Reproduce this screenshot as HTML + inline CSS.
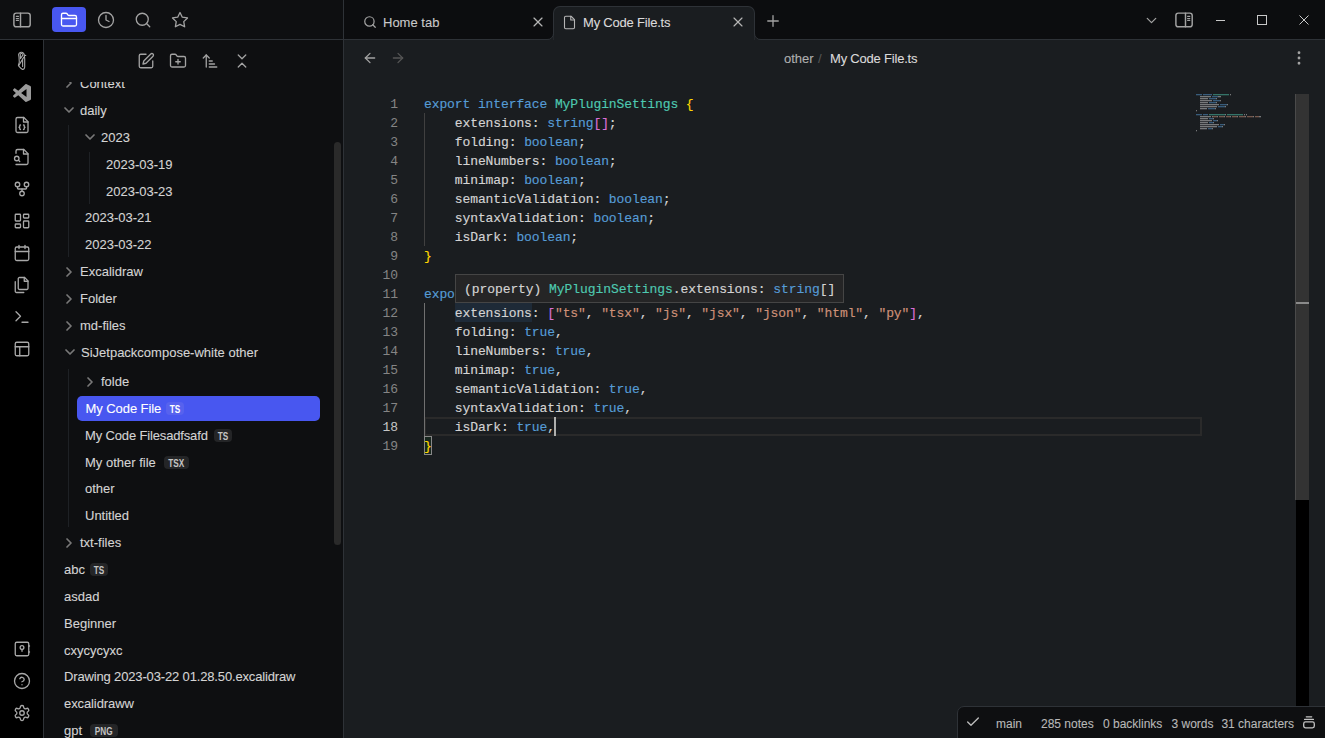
<!DOCTYPE html>
<html><head><meta charset="utf-8">
<style>
*{box-sizing:border-box;margin:0;padding:0}
html,body{width:1325px;height:738px;overflow:hidden;background:#1a1d20}
body{position:relative;font-family:"Liberation Sans",sans-serif;color:#dadada}
.a{position:absolute}
.t{position:absolute;white-space:pre;font-size:13px;line-height:16px;-webkit-text-stroke:0.1px currentColor}
svg.i{position:absolute;fill:none;stroke:currentColor;stroke-width:1.75;stroke-linecap:round;stroke-linejoin:round}
.badge{position:absolute;height:13px;border-radius:4px;background:#242527;text-align:center;color:#c4c4c4;font-size:10px;line-height:13px}
.badge span{display:block;font-weight:bold;transform:scaleX(0.82);position:relative;top:1px}
.code{position:absolute;font-family:"Liberation Mono",monospace;font-size:13px;letter-spacing:-0.1px;line-height:19px;white-space:pre;color:#d4d4d4;-webkit-text-stroke:0.15px currentColor}
.k{color:#569cd6}.ty{color:#4ec9b0}.s{color:#ce9178}.y{color:#ffd700}.p{color:#da70d6}
.ln{position:absolute;font-family:"Liberation Mono",monospace;font-size:13px;letter-spacing:-0.1px;line-height:19px;color:#858585;text-align:right;width:40px;left:358px}
</style></head><body>
<div class="a" style="left:0;top:0;width:343px;height:39px;background:#0e0f11"></div>
<div class="a" style="left:344px;top:0;width:981px;height:39px;background:#0c0d0f"></div>
<div class="a" style="left:0;top:39px;width:1325px;height:1px;background:#2e3237"></div>
<div class="a" style="left:0;top:40px;width:43px;height:698px;background:#000"></div>
<div class="a" style="left:44px;top:40px;width:299px;height:698px;background:#0e0f11"></div>
<div class="a" style="left:43px;top:39px;width:1px;height:699px;background:#2e3237"></div>
<div class="a" style="left:343px;top:0;width:1px;height:738px;background:#2e3237"></div>
<svg class="i" style="left:8px;top:8px;width:28px;height:24px;color:#a3a3a3;stroke-width:1.45" viewBox="0 0 28 24"><rect x="5.9" y="5.1" width="16.3" height="13.7" rx="2.4"/><path d="M12.5 5.1v13.7"/><path d="M8.3 8.3h2.2M8.3 10.6h2.2M8.3 12.5h2.2" stroke-width="1.2"/></svg>
<div class="a" style="left:52px;top:7px;width:34px;height:25px;border-radius:4px;background:#4857f0"></div>
<svg class="i" style="left:60px;top:11px;width:18px;height:18px;color:#ffffff;stroke-width:1.75" viewBox="0 0 24 24"><path d="M20 20a2 2 0 0 0 2-2V8a2 2 0 0 0-2-2h-7.9a2 2 0 0 1-1.69-.9L9.6 3.9A2 2 0 0 0 7.93 3H4a2 2 0 0 0-2 2v13a2 2 0 0 0 2 2Z"/><path d="M2 10h20"/></svg>
<svg class="i" style="left:97px;top:11px;width:18px;height:18px;color:#a3a3a3;stroke-width:1.75" viewBox="0 0 24 24"><circle cx="12" cy="12" r="10"/><polyline points="12 6 12 12 16 14"/></svg>
<svg class="i" style="left:134px;top:11px;width:18px;height:18px;color:#a3a3a3;stroke-width:1.75" viewBox="0 0 24 24"><circle cx="11" cy="11" r="8"/><path d="m21 21-4.3-4.3"/></svg>
<svg class="i" style="left:171px;top:11px;width:18px;height:18px;color:#a3a3a3;stroke-width:1.75" viewBox="0 0 24 24"><polygon points="12 2 15.09 8.26 22 9.27 17 14.14 18.18 21.02 12 17.77 5.82 21.02 7 14.14 2 9.27 8.91 8.26 12 2"/></svg>
<div class="a" style="left:553px;top:6px;width:202px;height:34px;background:#1a1d20;border:1px solid #2e3237;border-bottom:none;border-radius:7px 7px 0 0"></div>
<svg class="a" style="left:547px;top:33px;width:7px;height:7px" viewBox="0 0 7 7"><path d="M0 6.5 A6 6 0 0 0 6.5 0.5 L6.5 7 L0 7Z" fill="#1a1d20"/><path d="M0 6.5 A6 6 0 0 0 6.5 0.5" fill="none" stroke="#2e3237" stroke-width="1"/></svg>
<svg class="a" style="left:754px;top:33px;width:7px;height:7px" viewBox="0 0 7 7"><path d="M7 6.5 A6 6 0 0 1 0.5 0.5 L0.5 7 L7 7Z" fill="#1a1d20"/><path d="M7 6.5 A6 6 0 0 1 0.5 0.5" fill="none" stroke="#2e3237" stroke-width="1"/></svg>
<svg class="i" style="left:363px;top:15px;width:14px;height:14px;color:#a3a3a3;stroke-width:2.1" viewBox="0 0 24 24"><circle cx="11" cy="11" r="8"/><path d="m21 21-4.3-4.3"/></svg>
<div class="t" style="left:383px;top:15px;color:#c9c9c9">Home tab</div>
<svg class="i" style="left:530px;top:14px;width:16px;height:16px;color:#b5b5b5;stroke-width:1.75" viewBox="0 0 24 24"><path d="M18 6 6 18"/><path d="m6 6 12 12"/></svg>
<svg class="i" style="left:562px;top:15px;width:15px;height:15px;color:#b5b5b5;stroke-width:1.75" viewBox="0 0 24 24"><path d="M14.5 2H6a2 2 0 0 0-2 2v16a2 2 0 0 0 2 2h12a2 2 0 0 0 2-2V7.5L14.5 2z"/><polyline points="14 2 14 8 20 8"/></svg>
<div class="t" style="left:583px;top:15px;color:#dadada;letter-spacing:-0.2px">My Code File.ts</div>
<svg class="i" style="left:730px;top:14px;width:16px;height:16px;color:#b5b5b5;stroke-width:1.75" viewBox="0 0 24 24"><path d="M18 6 6 18"/><path d="m6 6 12 12"/></svg>
<svg class="i" style="left:764px;top:12px;width:18px;height:18px;color:#a3a3a3;stroke-width:1.75" viewBox="0 0 24 24"><path d="M5 12h14"/><path d="M12 5v14"/></svg>
<svg class="i" style="left:1143px;top:12px;width:17px;height:17px;color:#a3a3a3;stroke-width:1.75" viewBox="0 0 24 24"><path d="m6 9 6 6 6-6"/></svg>
<svg class="i" style="left:1170px;top:8px;width:28px;height:24px;color:#a3a3a3;stroke-width:1.45" viewBox="0 0 28 24"><rect x="5.9" y="5.1" width="16.3" height="13.7" rx="2.4"/><path d="M15.5 5.1v13.7"/><path d="M17.6 8.3h2.2M17.6 10.6h2.2M17.6 12.5h2.2" stroke-width="1.2"/></svg>
<div class="a" style="left:1216px;top:20px;width:9px;height:1px;background:#c8c8c8"></div>
<div class="a" style="left:1257px;top:15px;width:10px;height:10px;border:1px solid #c8c8c8"></div>
<svg class="a" style="left:1299px;top:15px;width:10px;height:10px" viewBox="0 0 10 10"><path d="M0.5 0.5L9.5 9.5M9.5 0.5L0.5 9.5" stroke="#c8c8c8" stroke-width="1"/></svg>
<svg class="i" style="left:362px;top:50px;width:16px;height:16px;color:#a3a3a3;stroke-width:1.9" viewBox="0 0 24 24"><path d="m12 19-7-7 7-7"/><path d="M19 12H5"/></svg>
<svg class="i" style="left:390px;top:50px;width:16px;height:16px;color:#555555;stroke-width:1.9" viewBox="0 0 24 24"><path d="M5 12h14"/><path d="m12 5 7 7-7 7"/></svg>
<div class="t" style="left:784px;top:51px;color:#b0b0b0">other</div>
<div class="t" style="left:818px;top:51px;color:#555">/</div>
<div class="t" style="left:830px;top:51px;color:#dadada;letter-spacing:-0.2px">My Code File.ts</div>
<svg class="i" style="left:1290px;top:49px;width:18px;height:18px;color:#a3a3a3;stroke-width:1.75" viewBox="0 0 24 24"><circle cx="12" cy="12" r="1"/><circle cx="12" cy="5" r="1"/><circle cx="12" cy="19" r="1"/></svg>
<svg class="a" style="left:12px;top:48px;width:20px;height:26px" viewBox="0 0 20 26"><g fill="none" stroke="#a6a6a6" stroke-width="1.1" stroke-linejoin="round" stroke-linecap="round"><path d="M6.6 6.6 C7 4.6 9 3.9 10.6 4.4 C11.5 4.8 12 5.5 12.3 6.6 L12.7 10.8 L12.7 19 C12.5 20.6 11.6 21.5 10.5 21.4 C9.4 20.9 8 19.6 7 18.4 L6.4 17.3 L7.3 14.2 L7 8.8 Z"/><path d="M8.3 5.9 C9.2 5 10.6 5.6 11 6.9 L8.4 10.6 Z"/><path d="M11.8 9.2 L6.8 17.4"/><path d="M10.6 11 L10.6 18.4"/></g><circle cx="13.6" cy="7.4" r="0.7" fill="#a6a6a6"/></svg>
<svg class="a" style="left:13px;top:84px;width:18px;height:18px" viewBox="0 0 100 100"><path fill="#9a9a9a" d="M96.46 10.8L75.86.87C73.48-.28 70.62.2 68.75 2.07L29.3 38.05 12.12 25.01c-1.6-1.21-3.840-1.11-5.33.24L1.28 30.26c-1.81 1.65-1.81 4.5 0 6.15L16.18 50 1.28 63.59c-1.81 1.65-1.81 4.5 0 6.15l5.51 5.01c1.49 1.35 3.73 1.45 5.33.24l17.18-13.04 39.45 35.98c1.87 1.87 4.73 2.35 7.11 1.2l20.6-9.93c2.16-1.04 3.54-3.23 3.54-5.63V16.43c0-2.4-1.38-4.59-3.54-5.63zM75.02 72.7L45.11 50l29.91-22.7v45.4z"/></svg>
<svg class="i" style="left:12.5px;top:116.0px;width:18px;height:18px;color:#a8a8a8;stroke-width:1.75" viewBox="0 0 24 24"><path d="M14.5 2H6a2 2 0 0 0-2 2v16a2 2 0 0 0 2 2h12a2 2 0 0 0 2-2V7.5L14.5 2z"/><polyline points="14 2 14 8 20 8"/><path d="M10 12a1 1 0 0 0-1 1v1a1 1 0 0 1-1 1 1 1 0 0 1 1 1v1a1 1 0 0 0 1 1"/><path d="M14 18a1 1 0 0 0 1-1v-1a1 1 0 0 1 1-1 1 1 0 0 1-1-1v-1a1 1 0 0 0-1-1"/></svg>
<svg class="i" style="left:12.5px;top:148.0px;width:18px;height:18px;color:#a8a8a8;stroke-width:1.75" viewBox="0 0 24 24"><path d="M4 22h14a2 2 0 0 0 2-2V7.5L14.5 2H6a2 2 0 0 0-2 2v3"/><polyline points="14 2 14 8 20 8"/><path d="M5 17a3 3 0 1 0 0-6 3 3 0 0 0 0 6z"/><path d="m9 18-1.5-1.5"/></svg>
<svg class="i" style="left:12.5px;top:180.0px;width:18px;height:18px;color:#a8a8a8;stroke-width:1.75" viewBox="0 0 24 24"><circle cx="12" cy="18" r="3"/><circle cx="6" cy="6" r="3"/><circle cx="18" cy="6" r="3"/><path d="M18 9v2c0 .6-.4 1-1 1H7c-.6 0-1-.4-1-1V9"/><path d="M12 12v3"/></svg>
<svg class="i" style="left:12.5px;top:212.0px;width:18px;height:18px;color:#a8a8a8;stroke-width:1.75" viewBox="0 0 24 24"><rect width="7" height="9" x="3" y="3" rx="1"/><rect width="7" height="5" x="14" y="3" rx="1"/><rect width="7" height="9" x="14" y="12" rx="1"/><rect width="7" height="5" x="3" y="16" rx="1"/></svg>
<svg class="i" style="left:12.5px;top:244.0px;width:18px;height:18px;color:#a8a8a8;stroke-width:1.75" viewBox="0 0 24 24"><rect width="18" height="18" x="3" y="4" rx="2" ry="2"/><line x1="16" x2="16" y1="2" y2="6"/><line x1="8" x2="8" y1="2" y2="6"/><line x1="3" x2="21" y1="10" y2="10"/></svg>
<svg class="i" style="left:12.5px;top:276.0px;width:18px;height:18px;color:#a8a8a8;stroke-width:1.75" viewBox="0 0 24 24"><path d="M15.5 2H8.6c-.4 0-.8.2-1.1.5-.3.3-.5.7-.5 1.1v12.8c0 .4.2.8.5 1.1.3.3.7.5 1.1.5h9.8c.4 0 .8-.2 1.1-.5.3-.3.5-.7.5-1.1V6.5L15.5 2z"/><path d="M3 7.6v12.8c0 .4.2.8.5 1.1.3.3.7.5 1.1.5h9.8"/><path d="M15 2v5h5"/></svg>
<svg class="i" style="left:12.5px;top:308.0px;width:18px;height:18px;color:#a8a8a8;stroke-width:1.75" viewBox="0 0 24 24"><polyline points="4 17 10 11 4 5"/><line x1="12" x2="20" y1="19" y2="19"/></svg>
<svg class="i" style="left:12.5px;top:340.0px;width:18px;height:18px;color:#a8a8a8;stroke-width:1.75" viewBox="0 0 24 24"><rect width="18" height="18" x="3" y="3" rx="2"/><path d="M3 9h18"/><path d="M9 21V9"/></svg>
<svg class="i" style="left:12.5px;top:640.0px;width:18px;height:18px;color:#a8a8a8;stroke-width:1.75" viewBox="0 0 24 24"><rect x="3" y="3" width="18" height="18" rx="2"/><circle cx="12" cy="10" r="2.5"/><path d="M12 12.5V15"/><path d="M21 8h1M21 16h1"/></svg>
<svg class="i" style="left:12.5px;top:672.0px;width:18px;height:18px;color:#a8a8a8;stroke-width:1.75" viewBox="0 0 24 24"><circle cx="12" cy="12" r="10"/><path d="M9.09 9a3 3 0 0 1 5.83 1c0 2-3 3-3 3"/><path d="M12 17h.01"/></svg>
<svg class="i" style="left:12.5px;top:704.0px;width:18px;height:18px;color:#a8a8a8;stroke-width:1.75" viewBox="0 0 24 24"><path d="M12.22 2h-.44a2 2 0 0 0-2 2v.18a2 2 0 0 1-1 1.73l-.43.25a2 2 0 0 1-2 0l-.15-.08a2 2 0 0 0-2.73.73l-.22.38a2 2 0 0 0 .73 2.73l.15.1a2 2 0 0 1 1 1.72v.51a2 2 0 0 1-1 1.74l-.15.09a2 2 0 0 0-.73 2.73l.22.38a2 2 0 0 0 2.73.73l.15-.08a2 2 0 0 1 2 0l.43.25a2 2 0 0 1 1 1.73V20a2 2 0 0 0 2 2h.44a2 2 0 0 0 2-2v-.18a2 2 0 0 1 1-1.73l.43-.25a2 2 0 0 1 2 0l.15.08a2 2 0 0 0 2.73-.73l.22-.39a2 2 0 0 0-.73-2.73l-.15-.08a2 2 0 0 1-1-1.74v-.5a2 2 0 0 1 1-1.74l.15-.09a2 2 0 0 0 .73-2.73l-.22-.38a2 2 0 0 0-2.73-.73l-.15.08a2 2 0 0 1-2 0l-.43-.25a2 2 0 0 1-1-1.73V4a2 2 0 0 0-2-2z"/><circle cx="12" cy="12" r="3"/></svg>
<svg class="i" style="left:137px;top:52px;width:18px;height:18px;color:#a3a3a3;stroke-width:1.75" viewBox="0 0 24 24"><path d="M12 3H5a2 2 0 0 0-2 2v14a2 2 0 0 0 2 2h14a2 2 0 0 0 2-2v-7"/><path d="M18.375 2.625a2.121 2.121 0 1 1 3 3L12 15l-4 1 1-4Z"/></svg>
<svg class="i" style="left:169px;top:52px;width:18px;height:18px;color:#a3a3a3;stroke-width:1.75" viewBox="0 0 24 24"><path d="M12 10v6"/><path d="M9 13h6"/><path d="M20 20a2 2 0 0 0 2-2V8a2 2 0 0 0-2-2h-7.9a2 2 0 0 1-1.69-.9L9.6 3.9A2 2 0 0 0 7.93 3H4a2 2 0 0 0-2 2v13a2 2 0 0 0 2 2Z"/></svg>
<svg class="i" style="left:201px;top:52px;width:18px;height:18px;color:#a3a3a3;stroke-width:1.75" viewBox="0 0 24 24"><path d="m3 8 4-4 4 4"/><path d="M7 4v16"/><path d="M11 12h4"/><path d="M11 16h7"/><path d="M11 20h10"/></svg>
<svg class="i" style="left:233px;top:52px;width:18px;height:18px;color:#a3a3a3;stroke-width:1.75" viewBox="0 0 24 24"><path d="m7 20 5-5 5 5"/><path d="m7 4 5 5 5-5"/></svg>
<div class="a" style="left:44px;top:82px;width:299px;height:656px;overflow:hidden">
<div class="a" style="left:33px;top:314px;width:243px;height:25px;border-radius:5px;background:#4857f0"></div>
<div class="a" style="left:24px;top:43px;width:1px;height:132px;background:#1e2125"></div>
<div class="a" style="left:45px;top:70px;width:1px;height:52px;background:#1e2125"></div>
<div class="a" style="left:24px;top:287px;width:1px;height:158px;background:#1e2125"></div>
<div class="a" style="left:290px;top:60px;width:7px;height:403px;border-radius:4px;background:#2a2a2a"></div>
<div class="t" style="left:36px;top:-6.1px;color:#d4d4d4;letter-spacing:0px">Context</div>
<svg class="i" style="left:16.5px;top:-6.6px;width:16px;height:16px;color:#787878;stroke-width:2.6" viewBox="0 0 24 24"><path d="m9 18 6-6-6-6"/></svg>
<div class="t" style="left:36px;top:20.8px;color:#d4d4d4;letter-spacing:0px">daily</div>
<svg class="i" style="left:16.5px;top:20.3px;width:16px;height:16px;color:#787878;stroke-width:2.6" viewBox="0 0 24 24"><path d="m6 9 6 6 6-6"/></svg>
<div class="t" style="left:57px;top:47.7px;color:#d4d4d4;letter-spacing:0px">2023</div>
<svg class="i" style="left:37.5px;top:47.2px;width:16px;height:16px;color:#787878;stroke-width:2.6" viewBox="0 0 24 24"><path d="m6 9 6 6 6-6"/></svg>
<div class="t" style="left:62px;top:74.6px;color:#d4d4d4;letter-spacing:0px">2023-03-19</div>
<div class="t" style="left:62px;top:101.5px;color:#d4d4d4;letter-spacing:0px">2023-03-23</div>
<div class="t" style="left:41px;top:128.4px;color:#d4d4d4;letter-spacing:0px">2023-03-21</div>
<div class="t" style="left:41px;top:155.3px;color:#d4d4d4;letter-spacing:0px">2023-03-22</div>
<div class="t" style="left:36px;top:182.2px;color:#d4d4d4;letter-spacing:0px">Excalidraw</div>
<svg class="i" style="left:16.5px;top:181.7px;width:16px;height:16px;color:#787878;stroke-width:2.6" viewBox="0 0 24 24"><path d="m9 18 6-6-6-6"/></svg>
<div class="t" style="left:36px;top:209.1px;color:#d4d4d4;letter-spacing:0px">Folder</div>
<svg class="i" style="left:16.5px;top:208.6px;width:16px;height:16px;color:#787878;stroke-width:2.6" viewBox="0 0 24 24"><path d="m9 18 6-6-6-6"/></svg>
<div class="t" style="left:36px;top:236.0px;color:#d4d4d4;letter-spacing:0px">md-files</div>
<svg class="i" style="left:16.5px;top:235.5px;width:16px;height:16px;color:#787878;stroke-width:2.6" viewBox="0 0 24 24"><path d="m9 18 6-6-6-6"/></svg>
<div class="t" style="left:37px;top:262.9px;color:#d4d4d4;letter-spacing:0px">SiJetpackcompose-white other</div>
<svg class="i" style="left:17.5px;top:262.4px;width:16px;height:16px;color:#787878;stroke-width:2.6" viewBox="0 0 24 24"><path d="m6 9 6 6 6-6"/></svg>
<div class="t" style="left:57px;top:292.0px;color:#d4d4d4;letter-spacing:0px">folde</div>
<svg class="i" style="left:37.5px;top:291.5px;width:16px;height:16px;color:#787878;stroke-width:2.6" viewBox="0 0 24 24"><path d="m9 18 6-6-6-6"/></svg>
<div class="t" style="left:41.599999999999994px;top:318.9px;color:#ffffff;letter-spacing:-0.08px">My Code File</div>
<div class="badge" style="top:319.9px;left:122.0px;width:18px;background:#5762ee;color:#fff"><span>TS</span></div>
<div class="t" style="left:41px;top:345.7px;color:#d4d4d4;letter-spacing:-0.15px">My Code Filesadfsafd</div>
<div class="badge" style="top:346.7px;left:169.5px;width:18px"><span>TS</span></div>
<div class="t" style="left:41px;top:372.6px;color:#d4d4d4;letter-spacing:0px">My other file</div>
<div class="badge" style="top:373.6px;left:120.2px;width:24.7px"><span>TSX</span></div>
<div class="t" style="left:41px;top:399.4px;color:#d4d4d4;letter-spacing:0px">other</div>
<div class="t" style="left:41px;top:426.2px;color:#d4d4d4;letter-spacing:0px">Untitled</div>
<div class="t" style="left:36px;top:453.1px;color:#d4d4d4;letter-spacing:0px">txt-files</div>
<svg class="i" style="left:16.5px;top:452.6px;width:16px;height:16px;color:#787878;stroke-width:2.6" viewBox="0 0 24 24"><path d="m9 18 6-6-6-6"/></svg>
<div class="t" style="left:20px;top:480.0px;color:#d4d4d4;letter-spacing:0px">abc</div>
<div class="badge" style="top:481.0px;left:46.2px;width:18px"><span>TS</span></div>
<div class="t" style="left:20px;top:506.8px;color:#d4d4d4;letter-spacing:0px">asdad</div>
<div class="t" style="left:20px;top:533.6px;color:#d4d4d4;letter-spacing:0px">Beginner</div>
<div class="t" style="left:20px;top:560.5px;color:#d4d4d4;letter-spacing:0px">cxycycyxc</div>
<div class="t" style="left:20px;top:587.4px;color:#d4d4d4;letter-spacing:-0.15px">Drawing 2023-03-22 01.28.50.excalidraw</div>
<div class="t" style="left:20px;top:614.2px;color:#d4d4d4;letter-spacing:-0.1px">excalidraww</div>
<div class="t" style="left:20px;top:641.0px;color:#d4d4d4;letter-spacing:0px">gpt</div>
<div class="badge" style="top:642.0px;left:46.3px;width:27.4px"><span>PNG</span></div>
</div>
<div class="a" style="left:455px;top:303px;width:77px;height:19px;background:#1e2a37"></div>
<div class="a" style="left:424px;top:417px;width:778px;height:19px;border:2px solid #2a2a2a"></div>
<div class="a" style="left:424px;top:436px;width:8px;height:19px;border:1px solid #888;background:#18271f"></div>
<div class="a" style="left:424px;top:113px;width:1px;height:133px;background:#404040"></div>
<div class="a" style="left:424px;top:303px;width:1px;height:133px;background:#707070"></div>
<div class="ln" style="top:95px;color:#858585">1</div>
<div class="ln" style="top:114px;color:#858585">2</div>
<div class="ln" style="top:133px;color:#858585">3</div>
<div class="ln" style="top:152px;color:#858585">4</div>
<div class="ln" style="top:171px;color:#858585">5</div>
<div class="ln" style="top:190px;color:#858585">6</div>
<div class="ln" style="top:209px;color:#858585">7</div>
<div class="ln" style="top:228px;color:#858585">8</div>
<div class="ln" style="top:247px;color:#858585">9</div>
<div class="ln" style="top:266px;color:#858585">10</div>
<div class="ln" style="top:285px;color:#858585">11</div>
<div class="ln" style="top:304px;color:#858585">12</div>
<div class="ln" style="top:323px;color:#858585">13</div>
<div class="ln" style="top:342px;color:#858585">14</div>
<div class="ln" style="top:361px;color:#858585">15</div>
<div class="ln" style="top:380px;color:#858585">16</div>
<div class="ln" style="top:399px;color:#858585">17</div>
<div class="ln" style="top:418px;color:#c6c6c6">18</div>
<div class="ln" style="top:437px;color:#858585">19</div>
<div class="code" style="left:424px;top:95px"><span class="k">export interface </span><span class="ty">MyPluginSettings</span> <span class="y">{</span>
    extensions: <span class="k">string</span><span class="p">[]</span>;
    folding: <span class="k">boolean</span>;
    lineNumbers: <span class="k">boolean</span>;
    minimap: <span class="k">boolean</span>;
    semanticValidation: <span class="k">boolean</span>;
    syntaxValidation: <span class="k">boolean</span>;
    isDark: <span class="k">boolean</span>;
<span class="y">}</span>

<span class="k">export const </span><span class="ty">DEFAULT_SETTINGS</span>: <span class="ty">MyPluginSettings</span> = <span class="y">{</span>
    extensions: <span class="p">[</span><span class="s">&quot;ts&quot;</span>, <span class="s">&quot;tsx&quot;</span>, <span class="s">&quot;js&quot;</span>, <span class="s">&quot;jsx&quot;</span>, <span class="s">&quot;json&quot;</span>, <span class="s">&quot;html&quot;</span>, <span class="s">&quot;py&quot;</span><span class="p">]</span>,
    folding: <span class="k">true</span>,
    lineNumbers: <span class="k">true</span>,
    minimap: <span class="k">true</span>,
    semanticValidation: <span class="k">true</span>,
    syntaxValidation: <span class="k">true</span>,
    isDark: <span class="k">true</span>,
<span class="y">}</span></div>
<div class="a" style="left:554px;top:417px;width:2px;height:19px;background:#aeafad"></div>
<div class="a" style="left:455px;top:274px;width:389px;height:29px;background:#252526;border:1px solid #454545"></div>
<div class="code" style="left:464px;top:280px;letter-spacing:-0.07px;color:#d4d4d4">(property) <span class="ty">MyPluginSettings</span>.extensions: <span class="k">string</span>[]</div>
<svg class="a" style="left:1196px;top:94px;width:70px;height:40px;opacity:0.5" viewBox="0 0 70 40"><rect x="0" y="0" width="6" height="1.3" fill="#569cd6"/><rect x="7" y="0" width="9" height="1.3" fill="#569cd6"/><rect x="17" y="0" width="16" height="1.3" fill="#4ec9b0"/><rect x="34" y="0" width="1" height="1.3" fill="#d4d4d4"/><rect x="4" y="2" width="11" height="1.3" fill="#d4d4d4"/><rect x="16" y="2" width="6" height="1.3" fill="#569cd6"/><rect x="22" y="2" width="2" height="1.3" fill="#d4d4d4"/><rect x="24" y="2" width="1" height="1.3" fill="#d4d4d4"/><rect x="4" y="4" width="8" height="1.3" fill="#d4d4d4"/><rect x="13" y="4" width="7" height="1.3" fill="#569cd6"/><rect x="20" y="4" width="1" height="1.3" fill="#d4d4d4"/><rect x="4" y="6" width="12" height="1.3" fill="#d4d4d4"/><rect x="17" y="6" width="7" height="1.3" fill="#569cd6"/><rect x="24" y="6" width="1" height="1.3" fill="#d4d4d4"/><rect x="4" y="8" width="8" height="1.3" fill="#d4d4d4"/><rect x="13" y="8" width="7" height="1.3" fill="#569cd6"/><rect x="20" y="8" width="1" height="1.3" fill="#d4d4d4"/><rect x="4" y="10" width="19" height="1.3" fill="#d4d4d4"/><rect x="24" y="10" width="7" height="1.3" fill="#569cd6"/><rect x="31" y="10" width="1" height="1.3" fill="#d4d4d4"/><rect x="4" y="12" width="17" height="1.3" fill="#d4d4d4"/><rect x="22" y="12" width="7" height="1.3" fill="#569cd6"/><rect x="29" y="12" width="1" height="1.3" fill="#d4d4d4"/><rect x="4" y="14" width="7" height="1.3" fill="#d4d4d4"/><rect x="12" y="14" width="7" height="1.3" fill="#569cd6"/><rect x="19" y="14" width="1" height="1.3" fill="#d4d4d4"/><rect x="0" y="16" width="1" height="1.3" fill="#d4d4d4"/><rect x="0" y="20" width="6" height="1.3" fill="#569cd6"/><rect x="7" y="20" width="5" height="1.3" fill="#569cd6"/><rect x="13" y="20" width="16" height="1.3" fill="#4ec9b0"/><rect x="29" y="20" width="1" height="1.3" fill="#d4d4d4"/><rect x="31" y="20" width="16" height="1.3" fill="#4ec9b0"/><rect x="48" y="20" width="1" height="1.3" fill="#d4d4d4"/><rect x="50" y="20" width="1" height="1.3" fill="#d4d4d4"/><rect x="4" y="22" width="11" height="1.3" fill="#d4d4d4"/><rect x="16" y="22" width="1" height="1.3" fill="#d4d4d4"/><rect x="17" y="22" width="4" height="1.3" fill="#ce9178"/><rect x="21" y="22" width="1" height="1.3" fill="#d4d4d4"/><rect x="23" y="22" width="5" height="1.3" fill="#ce9178"/><rect x="28" y="22" width="1" height="1.3" fill="#d4d4d4"/><rect x="30" y="22" width="4" height="1.3" fill="#ce9178"/><rect x="34" y="22" width="1" height="1.3" fill="#d4d4d4"/><rect x="36" y="22" width="5" height="1.3" fill="#ce9178"/><rect x="41" y="22" width="1" height="1.3" fill="#d4d4d4"/><rect x="43" y="22" width="6" height="1.3" fill="#ce9178"/><rect x="49" y="22" width="1" height="1.3" fill="#d4d4d4"/><rect x="51" y="22" width="6" height="1.3" fill="#ce9178"/><rect x="57" y="22" width="1" height="1.3" fill="#d4d4d4"/><rect x="59" y="22" width="4" height="1.3" fill="#ce9178"/><rect x="63" y="22" width="1" height="1.3" fill="#d4d4d4"/><rect x="64" y="22" width="1" height="1.3" fill="#d4d4d4"/><rect x="4" y="24" width="8" height="1.3" fill="#d4d4d4"/><rect x="13" y="24" width="4" height="1.3" fill="#569cd6"/><rect x="17" y="24" width="1" height="1.3" fill="#d4d4d4"/><rect x="4" y="26" width="12" height="1.3" fill="#d4d4d4"/><rect x="17" y="26" width="4" height="1.3" fill="#569cd6"/><rect x="21" y="26" width="1" height="1.3" fill="#d4d4d4"/><rect x="4" y="28" width="8" height="1.3" fill="#d4d4d4"/><rect x="13" y="28" width="4" height="1.3" fill="#569cd6"/><rect x="17" y="28" width="1" height="1.3" fill="#d4d4d4"/><rect x="4" y="30" width="19" height="1.3" fill="#d4d4d4"/><rect x="24" y="30" width="4" height="1.3" fill="#569cd6"/><rect x="28" y="30" width="1" height="1.3" fill="#d4d4d4"/><rect x="4" y="32" width="17" height="1.3" fill="#d4d4d4"/><rect x="22" y="32" width="4" height="1.3" fill="#569cd6"/><rect x="26" y="32" width="1" height="1.3" fill="#d4d4d4"/><rect x="4" y="34" width="7" height="1.3" fill="#d4d4d4"/><rect x="12" y="34" width="4" height="1.3" fill="#569cd6"/><rect x="16" y="34" width="1" height="1.3" fill="#d4d4d4"/><rect x="0" y="36" width="1" height="1.3" fill="#d4d4d4"/></svg>
<div class="a" style="left:1295px;top:94px;width:14px;height:406px;background:#333;border-left:1px solid #4a4a4a"></div>
<div class="a" style="left:1296px;top:302px;width:13px;height:2px;background:#8a8a8a"></div>
<div class="a" style="left:1296px;top:500px;width:13px;height:206px;background:#000"></div>
<div class="a" style="left:957px;top:706px;width:380px;height:40px;background:#0e0f11;border:1px solid #2e3237;border-radius:7px 0 0 0"></div>
<svg class="i" style="left:965px;top:714px;width:16px;height:16px;color:#bdbdbd;stroke-width:2" viewBox="0 0 24 24"><polyline points="20 6 9 17 4 12"/></svg>
<div class="t" style="left:996px;top:715.8px;font-size:12px;color:#b8b8b8">main</div>
<div class="t" style="left:1041px;top:715.8px;font-size:12px;color:#b8b8b8">285 notes</div>
<div class="t" style="left:1103px;top:715.8px;font-size:12px;color:#b8b8b8">0 backlinks</div>
<div class="t" style="left:1171.5px;top:715.8px;font-size:12px;color:#b8b8b8">3 words</div>
<div class="t" style="left:1221.4px;top:715.8px;font-size:12px;color:#b8b8b8">31 characters</div>
<svg class="i" style="left:1300px;top:710px;width:20px;height:20px;color:#c4c4c4;stroke-width:1.3" viewBox="0 0 20 20"><rect x="3.7" y="11.9" width="10.6" height="6.0" rx="1.8"/><path d="M4.6 9.4h8.8M6.3 6.8h5.4"/></svg>
</body></html>
